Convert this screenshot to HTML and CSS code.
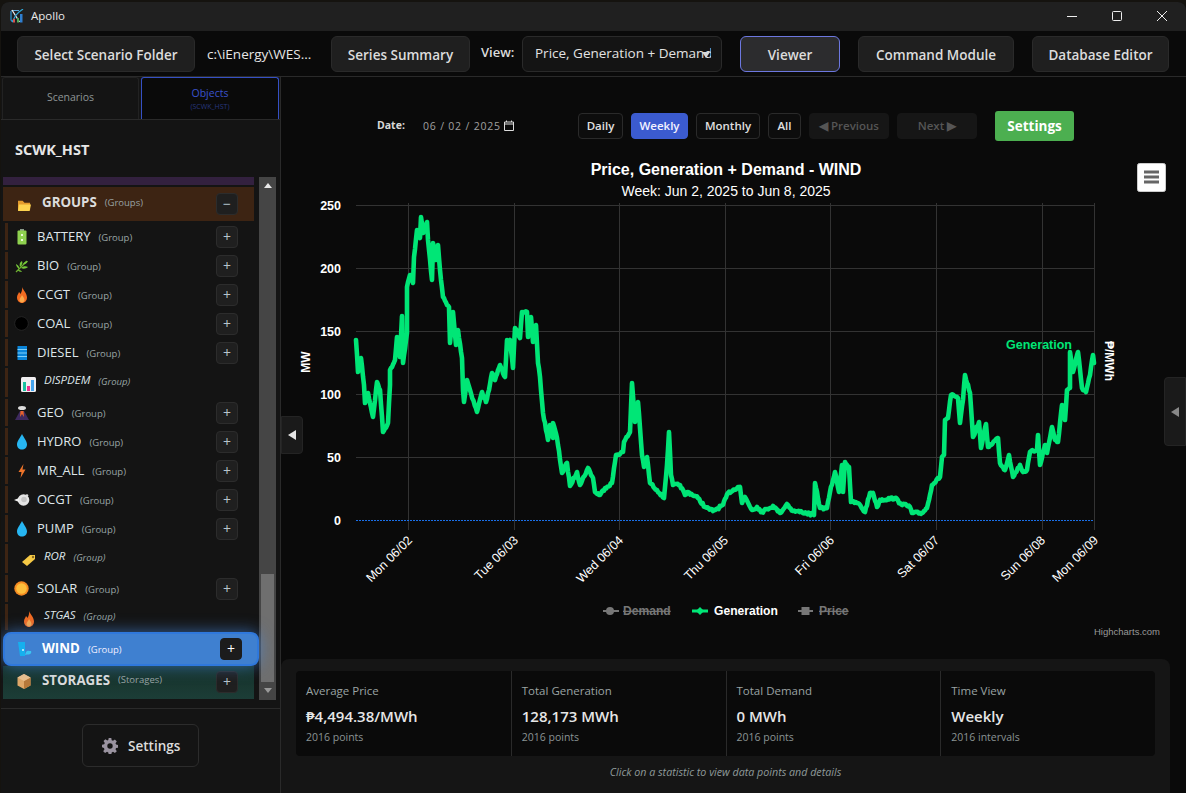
FILE: index.html
```html
<!DOCTYPE html>
<html lang="en">
<head>
<meta charset="utf-8">
<title>Apollo</title>
<link rel="stylesheet" href="styles.css">
</head>
<body>
<div class="window">
  <header class="titlebar">
    <svg class="logo" viewBox="0 0 14 14" width="14" height="14"><path d="M1.500 1.500H9" stroke="#5fa8d8" stroke-width="1" fill="none"/><path d="M1 2V11L3 13" stroke="#2f8fc8" stroke-width="1.300" fill="none"/><path d="M2 1L9.500 13" stroke="#f0f0f0" stroke-width="1.200"/><path d="M2 13L6 6 9 3 13 0" stroke="#2fa8d8" stroke-width="1.200" fill="none"/><rect x="3" y="10" width="2" height="3.500" fill="#d9534f"/><rect x="7" y="9" width="2" height="4.500" fill="#4fae5a"/><rect x="10" y="5" width="2.500" height="8.500" fill="#2f7fd0"/></svg>
    <span class="app-name">Apollo</span>
    <div class="win-controls">
      <svg viewBox="0 0 10 10" width="10" height="10"><path d="M0 5.500H10" stroke="#eee" stroke-width="1"/></svg>
      <svg viewBox="0 0 10 10" width="10" height="10"><rect x=".5" y=".5" width="9" height="9" rx="1" fill="none" stroke="#eee"/></svg>
      <svg viewBox="0 0 10 10" width="10" height="10"><path d="M0 0L10 10M10 0L0 10" stroke="#eee" stroke-width="1"/></svg>
    </div>
  </header>

  <nav class="toolbar">
    <button class="tbtn w-folder">Select Scenario Folder</button>
    <span class="path">c:\iEnergy\WES...</span>
    <button class="tbtn w-series">Series Summary</button>
    <span class="view-label">View:</span>
    <div class="view-select"><span class="view-value">Price, Generation + Demand</span><span class="view-arrow"></span></div>
    <button class="tbtn tbtn-active w-viewer">Viewer</button>
    <button class="tbtn w-command">Command Module</button>
    <button class="tbtn w-db">Database Editor</button>
  </nav>

  <div class="body-row">
    <aside class="sidebar">
      <div class="tabs">
        <div class="tab">Scenarios</div>
        <div class="tab tab-active"><span>Objects</span><small>(SCWK_HST)</small></div>
      </div>
      <h2 class="side-title">SCWK_HST</h2>
      <div class="list-wrap">
        <div class="list">
          <div class="strip"></div>
          <div class="section section-groups">
            <span class="sec-icon"><svg viewBox="0 0 16 14" width="15" height="13"><path d="M1 2h5l2 2h6v8H1z" fill="#e39b2d"/><path d="M2 6h13l-1.500 7H1z" fill="#fdd34f"/></svg></span>
            <b>GROUPS</b><em>(Groups)</em><button class="pm pm-sec">−</button>
          </div>

          <div class="row"><span class="ico"><svg viewBox="0 0 14 16" width="14" height="16"><rect x="5" y="0" width="4" height="2" fill="#8a9a8a"/><rect x="2.500" y="1.500" width="9" height="14" rx="1" fill="#8fd14f"/><rect x="6" y="5" width="2" height="2" fill="#e8f8d8"/><rect x="6" y="10" width="2" height="2" fill="#e8f8d8"/></svg></span><span class="nm">BATTERY</span><em>(Group)</em><button class="pm">+</button></div>

          <div class="row"><span class="ico"><svg viewBox="0 0 14 14" width="14" height="14"><path d="M1 13L12 2" stroke="#6fae30" stroke-width="1.200"/><path d="M5 8C4 5 5 3 7 2 8 4 7 6 5 8zM8 5C9 3 11 2 13 2 12 4 10 6 8 5zM4 10C2 8 1 7 1 5 3 6 5 8 4 10zM6 9C8 7 11 7 13 8 11 10 8 10 6 9zM3 11C3 12 5 13 7 13 6 11 4 11 3 11z" fill="#74c738"/></svg></span><span class="nm">BIO</span><em>(Group)</em><button class="pm">+</button></div>

          <div class="row"><span class="ico"><svg viewBox="0 0 14 16" width="14" height="16"><use href="#flame"/></svg></span><span class="nm">CCGT</span><em>(Group)</em><button class="pm">+</button></div>

          <div class="row"><span class="ico"><svg viewBox="0 0 15 15" width="15" height="15"><circle cx="7.500" cy="7.500" r="6.800" fill="#000" stroke="#333" stroke-width=".6"/></svg></span><span class="nm">COAL</span><em>(Group)</em><button class="pm">+</button></div>

          <div class="row"><span class="ico"><svg viewBox="0 0 14 14" width="14" height="14"><rect x="2.500" y="0" width="9.500" height="14" fill="#0a84d8"/><path d="M2.500 3.500H12M2.500 7H12M2.500 10.500H12" stroke="#7fd0fa" stroke-width="1"/></svg></span><span class="nm">DIESEL</span><em>(Group)</em><button class="pm">+</button></div>

          <div class="row row-alt"><span class="ico"><svg viewBox="0 0 15 15" width="15" height="15"><rect width="15" height="15" rx="1.500" fill="#f0eef0"/><rect x="2" y="5" width="3" height="9" fill="#18c0a0"/><rect x="6" y="9" width="3" height="5" fill="#ec2f8c"/><rect x="10" y="3" width="3" height="11" fill="#45a4ee"/></svg></span><span class="nm">DISPDEM</span><em>(Group)</em></div>

          <div class="row"><span class="ico"><svg viewBox="0 0 14 15" width="14" height="15"><path d="M0 15L5 6H9L14 15z" fill="#3e2a5e"/><path d="M5.500 6H8.500L9 12 7 9 5 12z" fill="#e8622a"/><ellipse cx="7" cy="3" rx="4" ry="2" fill="#ddd"/></svg></span><span class="nm">GEO</span><em>(Group)</em><button class="pm">+</button></div>

          <div class="row"><span class="ico"><svg viewBox="0 0 14 16" width="14" height="16"><use href="#drop"/></svg></span><span class="nm">HYDRO</span><em>(Group)</em><button class="pm">+</button></div>

          <div class="row"><span class="ico"><svg viewBox="0 0 14 14" width="14" height="14"><path d="M8.500 0L3.500 8H6.500L5.500 14 10.500 5.500H7.500z" fill="#f0752a"/></svg></span><span class="nm">MR_ALL</span><em>(Group)</em><button class="pm">+</button></div>

          <div class="row"><span class="ico"><svg viewBox="0 0 16 14" width="16" height="14"><circle cx="9.500" cy="7" r="5.800" fill="#e4e4e4"/><circle cx="10" cy="6.500" r="2.800" fill="#c4c4c4"/><circle cx="13" cy="2.500" r="1.300" fill="#ddd"/><path d="M0 7L5 5V9z" fill="#f0f0f0"/></svg></span><span class="nm">OCGT</span><em>(Group)</em><button class="pm">+</button></div>

          <div class="row"><span class="ico"><svg viewBox="0 0 14 16" width="14" height="16"><use href="#drop"/></svg></span><span class="nm">PUMP</span><em>(Group)</em><button class="pm">+</button></div>

          <div class="row row-alt"><span class="ico"><svg viewBox="0 0 15 14" width="15" height="14"><path d="M1 9L9 2 14 2 14 6 6 13z" fill="#f6c945"/><circle cx="12" cy="4" r="1.200" fill="#8a6a20"/></svg></span><span class="nm">ROR</span><em>(Group)</em></div>

          <div class="row"><span class="ico"><svg viewBox="0 0 15 15" width="15" height="15"><circle cx="7.500" cy="7.500" r="7.200" fill="#f58a22"/><circle cx="7.500" cy="7.500" r="5.300" fill="#fdbe3c"/></svg></span><span class="nm">SOLAR</span><em>(Group)</em><button class="pm">+</button></div>

          <div class="row row-alt row-stgas"><span class="ico"><svg viewBox="0 0 14 16" width="14" height="16"><use href="#flame"/></svg></span><span class="nm">STGAS</span><em>(Group)</em></div>

          <div class="section section-wind">
            <span class="sec-icon"><svg viewBox="0 0 16 15" width="16" height="15"><path d="M1 0H8V14H3z" fill="#16b0ee"/><circle cx="6" cy="8" r="1" fill="#d8f4ff"/><path d="M9 10C10.500 8 12 9 14 9 15 11 13 13 10 12.500L8 13z" fill="#3ac4f2"/></svg></span>
            <b>WIND</b><em>(Group)</em><button class="pm pm-wind">+</button>
          </div>

          <div class="section section-storages">
            <span class="sec-icon"><svg viewBox="0 0 14 15" width="14" height="15"><path d="M7 0L13.500 3.500V11.500L7 15 .5 11.500V3.500z" fill="#e0a868"/><path d="M7 7L13.500 3.500V11.500L7 15z" fill="#b8793a"/><path d="M.5 3.500L7 7 13.500 3.500 7 0z" fill="#eec08c"/></svg></span>
            <b>STORAGES</b><em>(Storages)</em><button class="pm pm-sec">+</button>
          </div>
        </div>
        <div class="scrollbar">
          <span class="arrow-up"></span>
          <span class="thumb"></span>
          <span class="arrow-down"></span>
        </div>
      </div>
      <div class="side-foot">
        <button class="side-settings">
          <svg viewBox="0 0 16 16" width="16" height="16"><path fill="#9a93a0" fill-rule="evenodd" d="M6.700 0h2.600l.4 2.200 1.300.6 1.900-1.300 1.900 1.900-1.300 1.900.6 1.300 2.200.4v2.600l-2.200.4-.6 1.300 1.300 1.900-1.900 1.900-1.900-1.300-1.300.6-.4 2.200H6.700l-.4-2.200-1.300-.6-1.900 1.300-1.900-1.900 1.300-1.900-.6-1.300L0 9.300V6.700l2.200-.4.600-1.300L1.500 3.100l1.900-1.900L5.300 2.500l1-.5zM8 5.300a2.700 2.700 0 100 5.400 2.700 2.700 0 000-5.400z"/></svg>
          Settings
        </button>
      </div>
    </aside>

    <main class="main">
      <div class="controls">
        <span class="date-label">Date:</span>
        <span class="date-value">06 / 02 / 2025</span>
        <svg class="cal" viewBox="0 0 10 11" width="10" height="11"><path d="M.5 2h9v8.500h-9zM.5 4h9M2.500 .5V2M7.500 .5V2" fill="none" stroke="#ddd"/></svg>
        <button class="pbtn b-daily">Daily</button>
        <button class="pbtn pbtn-on b-weekly">Weekly</button>
        <button class="pbtn b-monthly">Monthly</button>
        <button class="pbtn b-all">All</button>
        <button class="pbtn pbtn-off b-nav">◀ Previous</button>
        <button class="pbtn pbtn-off b-nav">Next ▶</button>
        <button class="green">Settings</button>
      </div>

      <svg class="chart" viewBox="281 150 905 497" width="905" height="497">
        <defs>
          <symbol id="flame" viewBox="0 0 14 16"><path d="M7 0C8 3 12 6 12 10.500 12 13.500 9.800 16 7 16S2 13.500 2 10.500C2 8 3.500 7 4 5 5 6 5.500 7 5.500 7 6.500 5 7.500 3 7 0z" fill="#f26b21"/><path d="M7 8C8 10 9.500 11 9.500 13 9.500 14.500 8.300 15.500 7 15.500S4.500 14.500 4.500 13C4.500 11 6.500 10 7 8z" fill="#fba94a"/></symbol>
          <symbol id="drop" viewBox="0 0 14 16"><path d="M7 0C9 4 12 7 12 10.500 12 13.500 9.800 15.500 7 15.500S2 13.500 2 10.500C2 7 5 4 7 0z" fill="#27b6f2"/></symbol>
        </defs>
        <g class="grid">
          <path d="M356 205.500H1094M356 268.500H1094M356 331.500H1094M356 394.500H1094M356 457.500H1094"/>
          <path d="M408.500 203V530M514.500 203V530M619.500 203V530M725.500 203V530M830.500 203V530M936.500 203V530M1042.500 203V530M1094.500 203V530"/>
        </g>
        <path class="zero" d="M356 520.500H1094"/>
        <polyline id="gen-series" class="series" points="356,340 358,372 361,358 364,385 365,403 368,393 373,417 377,382 380,390 383,432 388,423 390,385 390,370 395,360 397,337 400,357 402,316 403,363 407,333 407,287 410,275 413,283 414,257 417,230 420,238 421,217 423,233 427,222 428,240 432,280 433,243 436,260 438,245 440,270 443,297 447,305 449,307 450,343 453,312 456,345 458,330 462,358 463,390 464,402 467,380 470,390 477,412 482,392 486,402 489,390 492,373 495,380 500,365 505,377 507,340 510,340 513,368 515,328 520,338 522,312 527,312 528,337 531,317 533,342 536,325 538,363 540,377 543,413 548,440 550,425 553,438 553,423 557,438 562,473 567,463 570,486 577,472 580,485 588,468 593,478 595,492 600,495 605,488 612,483 616,455 623,452 624,442 630,432 632,383 635,422 638,402 642,455 644,467 647,457 650,483 657,490 664,498 667,465 669,432 671,475 673,485 680,485 685,495 688,492 698,498 705,507 713,511 723,505 728,493 738,487 740,487 742,503 745,497 752,510 757,507 762,512 767,509 773,506 780,513 787,504 793,511 802,512 814,515 815,483 820,508 827,508 830,492 835,472 839,492 842,465 843,492 845,462 849,467 851,502 858,503 865,512 870,493 873,493 877,507 880,500 895,498 900,503 910,507 912,513 922,513 927,508 932,485 940,477 942,457 944,455 945,420 948,418 951,395 958,398 960,423 963,400 965,375 970,393 973,437 979,422 981,448 986,424 988,447 998,438 1000,463 1005,470 1009,455 1013,477 1020,465 1023,472 1027,470 1030,452 1037,450 1038,435 1040,465 1045,445 1047,453 1052,427 1055,440 1058,442 1062,405 1065,420 1067,390 1070,388 1070,352 1073,372 1078,352 1082,388 1086,392 1090,375 1093,355 1094,363"/>
        <text class="t-title" x="726" y="175">Price, Generation + Demand - WIND</text>
        <text class="t-sub" x="726" y="196">Week: Jun 2, 2025 to Jun 8, 2025</text>
        <g class="t-y">
          <text x="341" y="210">250</text><text x="341" y="273">200</text><text x="341" y="336">150</text><text x="341" y="399">100</text><text x="341" y="462">50</text><text x="341" y="525">0</text>
        </g>
        <text class="t-axis" transform="translate(310 362) rotate(-90)">MW</text>
        <text class="t-axis" transform="translate(1105 361) rotate(90)">₱/MWh</text>
        <text class="t-gen" x="1006" y="349">Generation</text>
        <g class="t-x">
          <text transform="translate(413 541) rotate(-45)">Mon 06/02</text>
          <text transform="translate(519 541) rotate(-45)">Tue 06/03</text>
          <text transform="translate(624 541) rotate(-45)">Wed 06/04</text>
          <text transform="translate(729 541) rotate(-45)">Thu 06/05</text>
          <text transform="translate(835 541) rotate(-45)">Fri 06/06</text>
          <text transform="translate(940 541) rotate(-45)">Sat 06/07</text>
          <text transform="translate(1046 541) rotate(-45)">Sun 06/08</text>
          <text transform="translate(1099 541) rotate(-45)">Mon 06/09</text>
        </g>
        <g class="legend">
          <path class="lg-off" d="M603 611H619"/><circle class="lg-dot" cx="610" cy="611" r="4"/>
          <text class="lg-t-off" x="623" y="615">Demand</text>
          <path class="lg-on" d="M692 611H708"/><path class="lg-dia" d="M700 607L704 611 700 615 696 611z"/>
          <text class="lg-t-on" x="714" y="615">Generation</text>
          <path class="lg-off" d="M798 611H813"/><rect class="lg-dot" x="801.500" y="607" width="8" height="8"/>
          <text class="lg-t-off" x="819" y="615">Price</text>
        </g>
        <text class="credit" x="1160" y="635">Highcharts.com</text>
        <rect class="menu-bg" x="1137.500" y="163.500" width="28" height="28" rx="2"/>
        <path class="menu-lines" d="M1144 172H1159M1144 177H1159M1144 182H1159"/>
      </svg>

      <section class="stats">
        <div class="stat-row">
          <div class="stat"><span class="s-label">Average Price</span><strong>₱4,494.38/MWh</strong><span class="s-sub">2016 points</span></div>
          <div class="stat"><span class="s-label">Total Generation</span><strong>128,173 MWh</strong><span class="s-sub">2016 points</span></div>
          <div class="stat"><span class="s-label">Total Demand</span><strong>0 MWh</strong><span class="s-sub">2016 points</span></div>
          <div class="stat"><span class="s-label">Time View</span><strong>Weekly</strong><span class="s-sub">2016 intervals</span></div>
        </div>
        <p class="hint">Click on a statistic to view data points and details</p>
      </section>

      <button class="collapse collapse-left"><span class="tri-left"></span></button>
      <button class="collapse collapse-right"><span class="tri-left tri-grey"></span></button>
    </main>
  </div>
</div>
<script src="chart.js"></script>
</body>
</html>
```
FILE: styles.css
```css
* { box-sizing: border-box; }
html, body { margin: 0; height: 100%; }
body {
  background: #15130f;
  overflow: hidden;
  font-family: "Open Sans", "Noto Sans", sans-serif;
  color: #e2e2e2;
}
button { font-family: inherit; cursor: pointer; }

.window {
  height: 791px;
  margin: 2px 0 0 1px;
  border-radius: 8px 8px 0 0;
  background: #0a0a0a;
  display: flex;
  flex-direction: column;
  overflow: hidden;
}

/* title bar */
.titlebar {
  height: 29px;
  flex: none;
  background: #202020;
  display: flex;
  align-items: center;
  padding-left: 9px;
}
.logo { margin-right: 7px; margin-bottom: 1px; }
.app-name { font-size: 11.500px; color: #e8e8e8; padding-bottom: 2px; }
.win-controls { margin-left: auto; display: flex; gap: 35px; padding-right: 19px; padding-bottom: 1px; }

/* top toolbar */
.toolbar {
  height: 46px;
  flex: none;
  display: flex;
  align-items: center;
  background: #0a0a0a;
  border-bottom: 1px solid #2a2a2a;
  padding-left: 16px;
}
.tbtn {
  height: 36px;
  background: #1f1f1f;
  border: 1px solid #2a2a2a;
  border-radius: 6px;
  color: #dcdcdc;
  font-size: 13.500px;
  font-weight: 600;
  padding: 2px 0 0;
}
.tbtn-active { background: #2c2c2e; border-color: #6d78e0; }
.w-folder { width: 178px; }
.w-series { width: 139px; }
.w-viewer { width: 100px; margin-left: 18px; }
.w-command { width: 156px; margin-left: 18px; }
.w-db { width: 137px; margin-left: 18px; }
.path { width: 136px; padding-left: 12px; font-size: 13.500px; color: #e6e6e6; white-space: nowrap; }
.view-label { margin: 0 6px 4px 11px; font-size: 13px; font-weight: 600; color: #dcdcdc; width: 35px; }
.view-select {
  width: 200px;
  height: 36px;
  background: #141414;
  border: 1px solid #2a2a2a;
  border-radius: 6px;
  display: flex;
  align-items: center;
  padding: 0 0 2px 12px;
  position: relative;
  overflow: hidden;
}
.view-value { width: 176px; overflow: hidden; font-size: 13.500px; color: #e2e2e2; white-space: nowrap; }
.view-arrow {
  position: absolute;
  right: 11px;
  top: 15px;
  border-left: 4px solid transparent;
  border-right: 4px solid transparent;
  border-top: 6px solid #d8d8d8;
}

.body-row { flex: 1; min-height: 0; display: flex; }

/* sidebar */
.sidebar {
  width: 280px;
  flex: none;
  background: #141414;
  border-right: 1px solid #2a2a2a;
  display: flex;
  flex-direction: column;
}
.tabs { display: flex; height: 43px; flex: none; border-bottom: 1px solid #2a2a2a; gap: 2px; padding-left: 1px; }
.tab {
  width: 137px;
  background: #141414;
  border: 1px solid #222;
  border-bottom: none;
  border-radius: 3px 3px 0 0;
  display: flex;
  flex-direction: column;
  align-items: center;
  justify-content: center;
  font-size: 10.500px;
  color: #8e9494;
  padding-bottom: 4px;
}
.tab-active { width: 138px; background: #0a0a0a; border-color: #3550c4; color: #3a52cc; line-height: 1.100; padding-bottom: 0; padding-top: 2px; }
.tab-active small { font-size: 7px; color: #27377f; margin-top: 3px; }
.side-title { margin: 0; padding: 19px 0 0 14px; height: 57px; flex: none; font-size: 14.500px; font-weight: 700; color: #e6e6e6; line-height: 22px; }
.list-wrap { flex: 1; min-height: 0; display: flex; padding-left: 2px; height: 523px; }
.list { width: 251px; flex: none; }
.strip { height: 8px; background: #33213f; margin-bottom: 2px; }

.section { display: flex; align-items: center; position: relative; }
.section b { font-size: 13.300px; font-weight: 700; color: #dcdcdc; }
.section em { font-style: normal; font-size: 9.500px; color: #9aa3a3; margin-left: 8px; }
.sec-icon { width: 39px; padding-left: 14px; display: flex; }
.section-groups { height: 34px; background: #3d2413; margin-bottom: 2px; padding-bottom: 4px; }
.section-groups .sec-icon { padding-top: 6px; }
.section-groups .pm { margin-top: 4px; }
.section-wind {
  height: 34px;
  width: 256px;
  background: #3f80d0;
  border: 2px solid #2f78dc;
  border-radius: 8px;
  box-shadow: 0 0 16px rgba(70, 140, 230, .65);
  margin-left: 0;
  z-index: 2;
  padding-bottom: 2px;
}
.section-wind .sec-icon { width: 37px; padding-left: 12px; padding-top: 2px; }
.section-wind b { color: #fff; }
.section-wind em { color: #eef; margin-top: 2px; }
.section-wind .pm { margin-top: 2px; }
.section-storages { height: 33px; background: linear-gradient(#153129, #1c3d37); padding-bottom: 6px; }
.section-storages .sec-icon { padding-top: 4px; }
.section-storages .pm { margin-top: 4px; }

.row { height: 27px; margin: 0 0 2px 2px; border-left: 3px solid #3d2413; display: flex; align-items: center; }
.row .ico { width: 29px; display: flex; justify-content: center; padding-right: 2px; margin-left: 0; }
.nm { font-size: 13px; color: #dfe6ea; margin-top: -2px; }
.row em { font-style: normal; font-size: 9.500px; color: #9aa6a6; margin-left: 8px; padding-top: 2px; }
.row-alt { height: 29px; font-style: italic; padding-bottom: 4px; }
.row-alt .ico { width: 36px; padding-left: 5px; padding-right: 0; padding-top: 7px; }
.row-alt .nm { font-size: 11.500px; }
.row-alt em { font-style: italic; font-size: 9.500px; }
.row-stgas { height: 26px; margin-bottom: 2px; }

.pm {
  margin-left: auto;
  width: 22px;
  height: 22px;
  background: #1f1f1f;
  border: 1px solid #2c2c2c;
  border-radius: 4px;
  color: #b8c4cc;
  font-size: 14px;
  line-height: 1;
  padding: 0;
  margin-right: 16px;
}
.pm-sec { margin-right: 16px; }
.pm-wind { background: #1c1c1c; border-color: #1c1c1c; color: #fff; margin-right: 15px; }

.scrollbar { width: 17px; margin-left: 5px; background: #454545; display: flex; flex-direction: column; align-items: center; height: 523px; flex: none; }
.arrow-up { margin-top: 6px; border-left: 4px solid transparent; border-right: 4px solid transparent; border-bottom: 5px solid #e8e8e8; }
.thumb { width: 13px; height: 108px; background: #6f6f6f; margin-top: 386px; }
.arrow-down { margin-top: 6px; border-left: 4px solid transparent; border-right: 4px solid transparent; border-top: 5px solid #999; }

.side-foot {
  height: 85px;
  flex: none;
  border-top: 1px solid #2a2a2a;
  margin-top: 8px;
  padding: 15px 0 0 81px;
}
.side-settings {
  width: 117px;
  height: 43px;
  background: #141414;
  border: 1px solid #2c2c2c;
  border-radius: 6px;
  color: #dcdcdc;
  font-size: 13.500px;
  font-weight: 600;
  display: flex;
  align-items: center;
  gap: 10px;
  padding: 0 0 0 19px;
}

/* main */
.main { flex: 1; min-width: 0; position: relative; display: flex; flex-direction: column; }
.controls { height: 73px; flex: none; display: flex; align-items: center; padding-top: 24px; }
.date-label { margin-left: 96px; width: 46px; font-size: 10.500px; font-weight: 700; color: #d8d8d8; margin-top: -2px; }
.date-value { width: 81px; font-size: 10.500px; letter-spacing: .8px; color: #a0a0a0; white-space: nowrap; }
.cal { margin-right: 64px; }
.pbtn {
  height: 26px;
  background: #0d0d0d;
  border: 1px solid #2a2a2a;
  border-radius: 4px;
  color: #e0e0e0;
  font-size: 11.500px;
  font-weight: 600;
  padding: 0;
  margin-right: 8px;
}
.b-daily { width: 45px; }
.b-weekly { width: 57px; }
.b-monthly { width: 64px; }
.b-all { width: 33px; }
.pbtn-on { background: #3b5bcf; border-color: #3b5bcf; color: #f2f2ff; }
.pbtn-off { width: 80px; background: #161616; border-color: #161616; color: #555; }
.green {
  margin-left: 10px;
  width: 79px;
  height: 30px;
  background: #4caf50;
  border: none;
  border-radius: 3px;
  color: #fff;
  font-size: 13.500px;
  font-weight: 700;
  padding: 0;
}

.chart { display: block; flex: none; margin-top: 0; font-family: "Liberation Sans", Arial, sans-serif; }
.grid path { fill: none; stroke: #333; stroke-width: 1; }
.zero { stroke: #1a6fe8; stroke-width: 1; stroke-dasharray: 2 1; fill: none; }
.series { fill: none; stroke: #00e676; stroke-width: 4.600; stroke-linejoin: round; stroke-linecap: round; }
.t-title { fill: #fff; font-size: 16px; font-weight: 700; text-anchor: middle; }
.t-sub { fill: #fff; font-size: 14px; text-anchor: middle; }
.t-y text { fill: #fff; font-size: 12.500px; font-weight: 700; text-anchor: end; }
.t-axis { fill: #fff; font-size: 12px; font-weight: 700; text-anchor: middle; }
.t-gen { fill: #00e676; font-size: 12.500px; font-weight: 700; }
.t-x text { fill: #fff; font-size: 12.500px; text-anchor: end; }
.lg-off { stroke: #777; stroke-width: 2; fill: none; }
.lg-dot { fill: #777; }
.lg-on { stroke: #00e676; stroke-width: 3; fill: none; }
.lg-dia { fill: #00e676; }
.lg-t-off { fill: #777; font-size: 12.100px; font-weight: 700; text-decoration: line-through; }
.lg-t-on { fill: #fff; font-size: 12.100px; font-weight: 700; }
.credit { fill: #999; font-size: 9.500px; text-anchor: end; }
.menu-bg { fill: #fff; stroke: #ccc; }
.menu-lines { stroke: #666; stroke-width: 3; fill: none; }

.stats {
  flex: 1;
  margin: 12px 16px 0 0;
  background: #151515;
  border-radius: 8px 8px 0 0;
  padding: 12px 15px 0;
}
.stat-row { display: grid; grid-template-columns: repeat(4, 1fr); height: 85px; background: #0a0a0a; border-radius: 4px; }
.stat { display: flex; flex-direction: column; padding: 11px 10px 0; border-left: 1px solid #2a2a2a; }
.stat:first-child { border-left: none; }
.s-label { font-size: 11.500px; color: #9aa3a3; line-height: 18px; }
.stat strong { font-size: 15px; font-weight: 600; color: #e6e6e6; line-height: 22px; margin-top: 5px; }
.s-sub { font-size: 10.500px; color: #8a9494; line-height: 16px; margin-top: 2px; }
.hint { margin: 9px 0 0; text-align: center; font-size: 10.700px; font-style: italic; color: #8f9a9a; line-height: 14px; }

.collapse { position: absolute; background: #1a1a1a; border: 1px solid #242424; padding: 0; display: flex; align-items: center; justify-content: center; }
.collapse-left { left: 0; top: 339px; width: 22px; height: 38px; border-radius: 0 4px 4px 0; }
.collapse-right { right: 0; top: 300px; width: 22px; height: 69px; border-radius: 4px 0 0 4px; }
.tri-left { border-top: 5px solid transparent; border-bottom: 5px solid transparent; border-right: 8px solid #e4e4e4; }
.tri-grey { border-right-color: #888; }
```
FILE: chart.js
```js
(function () {
  var line = document.getElementById("gen-series");
  var anchors = line.getAttribute("points").trim().split(/\s+/).map(function (p) {
    return p.split(",").map(Number);
  });
  var out = [];
  var seed = 7;
  function noise() {
    seed = (seed * 16807) % 2147483647;
    return (seed / 2147483647 - 0.5) * 2;
  }
  for (var i = 0; i < anchors.length - 1; i++) {
    var a = anchors[i], b = anchors[i + 1];
    var steps = Math.max(1, Math.round(Math.abs(b[0] - a[0]) / 1.1));
    for (var s = 0; s < steps; s++) {
      var t = s / steps;
      var jitter = s === 0 ? 0 : noise() * 1.3;
      out.push((a[0] + (b[0] - a[0]) * t).toFixed(1) + "," + (a[1] + (b[1] - a[1]) * t + jitter).toFixed(1));
    }
  }
  var last = anchors[anchors.length - 1];
  out.push(last[0] + "," + last[1]);
  line.setAttribute("points", out.join(" "));
})();
```
